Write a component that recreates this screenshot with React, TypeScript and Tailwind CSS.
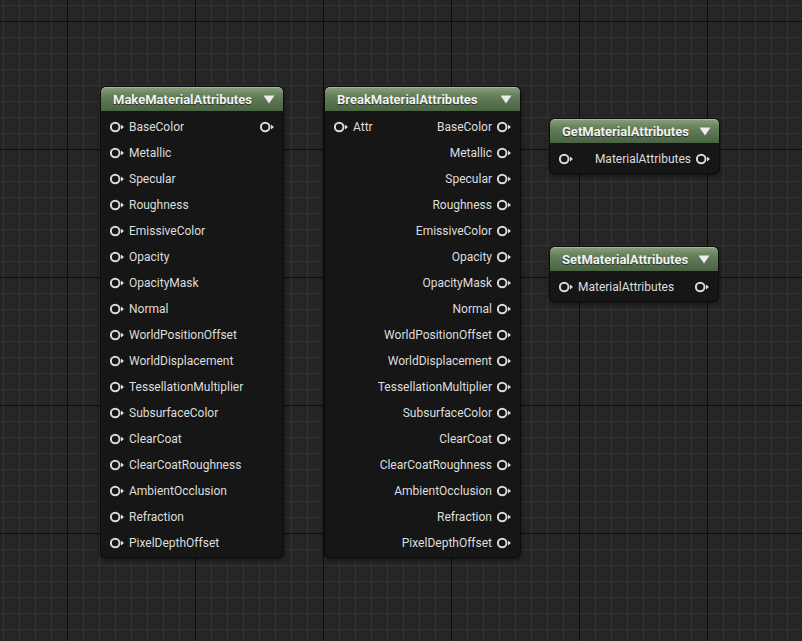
import React from "react";

type Row = { left?: string; right?: string; leftPin?: boolean; rightPin?: boolean };

function Pin() {
  return (
    <svg width="14" height="12" viewBox="0 0 14 12" className="shrink-0">
      <circle cx="5.2" cy="6" r="4.3" fill="none" stroke="#dadada" strokeWidth="2" />
      <polygon points="11,3.6 14,6 11,8.4" fill="#dadada" />
    </svg>
  );
}

function Node({
  title,
  rows,
  className,
}: {
  title: string;
  rows: Row[];
  className: string;
}) {
  return (
    <div
      className={`absolute rounded-[5px] bg-[#151615] shadow-[0_2px_6px_rgba(0,0,0,0.7)] ring-1 ring-[#0c0c0c] ${className}`}
    >
      <div className="flex h-[24px] items-center justify-between rounded-t-[5px] bg-[linear-gradient(to_bottom,#88a27e_0%,#65805b_35%,#4a6343_100%)] pl-[12px] pr-[8px] pt-[1px] shadow-[inset_0_1px_0_rgba(255,255,255,0.25)]">
        <span className="text-[13px] font-bold text-[#f2f2f2] [text-shadow:0_1px_1px_rgba(0,0,0,0.6)]">
          {title}
        </span>
        <svg width="12" height="9" viewBox="0 0 12 9">
          <polygon points="0.5,0.5 11.5,0.5 6,8.5" fill="#ececec" />
        </svg>
      </div>
      <div className="flex flex-col pb-[1px] pt-[3px]">
        {rows.map((r, i) => (
          <div key={i} className="flex h-[26px] items-center justify-between px-[9px] text-[12px] text-[#dedede]">
            <div className="flex items-center gap-[5px]">
              {r.leftPin && <Pin />}
              {r.left && <span>{r.left}</span>}
            </div>
            <div className="flex items-center gap-[5px]">
              {r.right && <span>{r.right}</span>}
              {r.rightPin && <Pin />}
            </div>
          </div>
        ))}
      </div>
    </div>
  );
}

const attrs = [
  "BaseColor",
  "Metallic",
  "Specular",
  "Roughness",
  "EmissiveColor",
  "Opacity",
  "OpacityMask",
  "Normal",
  "WorldPositionOffset",
  "WorldDisplacement",
  "TessellationMultiplier",
  "SubsurfaceColor",
  "ClearCoat",
  "ClearCoatRoughness",
  "AmbientOcclusion",
  "Refraction",
  "PixelDepthOffset",
];

export default function App() {
  const makeRows: Row[] = attrs.map((a, i) => ({
    left: a,
    leftPin: true,
    rightPin: i === 0,
  }));
  const breakRows: Row[] = attrs.map((a, i) => ({
    left: i === 0 ? "Attr" : undefined,
    leftPin: i === 0,
    right: a,
    rightPin: true,
  }));
  return (
    <div className="relative h-[641px] w-[802px] overflow-hidden bg-[#262626] font-['Roboto',_'Liberation_Sans',_sans-serif] [background-image:linear-gradient(to_right,#0e0e0e_1px,transparent_1px),linear-gradient(to_bottom,#0e0e0e_1px,transparent_1px),linear-gradient(to_right,#343434_1px,transparent_1px),linear-gradient(to_bottom,#343434_1px,transparent_1px)] [background-size:128px_128px,128px_128px,16px_16px,16px_16px] [background-position:67px_21px,67px_21px,3px_5px,3px_5px]">
      <Node title="MakeMaterialAttributes" rows={makeRows} className="left-[101px] top-[87px] w-[182px]" />
      <Node title="BreakMaterialAttributes" rows={breakRows} className="left-[325px] top-[87px] w-[195px]" />
      <Node
        title="GetMaterialAttributes"
        rows={[{ leftPin: true, right: "MaterialAttributes", rightPin: true }]}
        className="left-[550px] top-[119px] w-[169px]"
      />
      <Node
        title="SetMaterialAttributes"
        rows={[{ leftPin: true, left: "MaterialAttributes", rightPin: true }]}
        className="left-[550px] top-[247px] w-[168px]"
      />
    </div>
  );
}
